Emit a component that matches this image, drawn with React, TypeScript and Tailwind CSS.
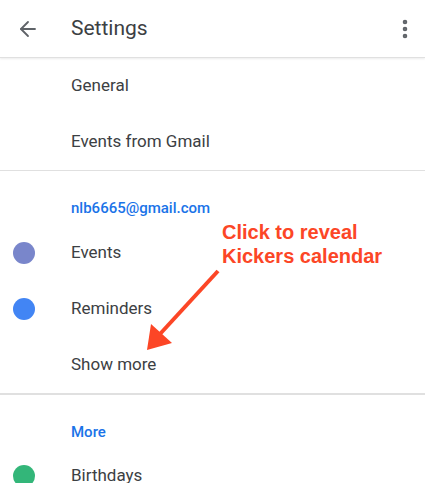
import { ArrowLeft, EllipsisVertical } from "lucide-react";

interface RowProps {
  label: string;
  dot?: string;
}

function Row({ label, dot }: RowProps) {
  return (
    <div className="h-14 flex items-center">
      <div className="w-[71px] flex items-center pl-[13px]">
        {dot && <div className={`w-[22px] h-[22px] rounded-full ${dot}`} />}
      </div>
      <span className="text-[17px] text-[#3c4043]">{label}</span>
    </div>
  );
}

function SectionLabel({ label, h }: { label: string; h: string }) {
  return (
    <div className={`${h} pt-[25px] pl-[71px]`}>
      <span className="text-[15px] leading-5 font-medium text-[#1a73e8]">
        {label}
      </span>
    </div>
  );
}

export default function App() {
  return (
    <div
      className="relative w-[425px] h-[483px] overflow-hidden bg-white"
      style={{ fontFamily: "Roboto, 'Liberation Sans', sans-serif" }}
    >
      <header className="h-[58px] flex items-center border-b border-[#e0e0e0] shadow-[0_1px_2px_rgba(0,0,0,0.08)]">
        <div className="w-[71px] pl-4">
          <ArrowLeft size={24} strokeWidth={1.8} className="text-[#5f6368]" />
        </div>
        <h1 className="flex-1 text-[21px] text-[#3c4043]">Settings</h1>
        <div className="pr-[8px]">
          <EllipsisVertical size={24} strokeWidth={2.6} className="text-[#5f6368]" />
        </div>
      </header>

      <section className="border-b border-[#e0e0e0]">
        <Row label="General" />
        <Row label="Events from Gmail" />
      </section>

      <section className="border-b-2 border-[#e0e0e0]">
        <SectionLabel label="nlb6665@gmail.com" h="h-[54px]" />
        <Row label="Events" dot="bg-[#7986cb]" />
        <Row label="Reminders" dot="bg-[#4285f4]" />
        <Row label="Show more" />
      </section>

      <section>
        <SectionLabel label="More" h="h-[53px]" />
        <Row label="Birthdays" dot="bg-[#33b679]" />
      </section>

      <div
        className="absolute left-[222px] top-[220px] text-[20px] leading-6 font-bold text-[#fc4626]"
        style={{ fontFamily: "'Liberation Sans', Arial, sans-serif" }}
      >
        Click to reveal
        <br />
        Kickers calendar
      </div>

      <svg
        className="absolute left-0 top-0"
        width="425"
        height="483"
        viewBox="0 0 425 483"
      >
        <line
          x1="218"
          y1="271"
          x2="160"
          y2="334"
          stroke="#fc4626"
          strokeWidth="4"
        />
        <polygon points="147,350 151,324 172,343" fill="#fc4626" />
      </svg>
    </div>
  );
}
